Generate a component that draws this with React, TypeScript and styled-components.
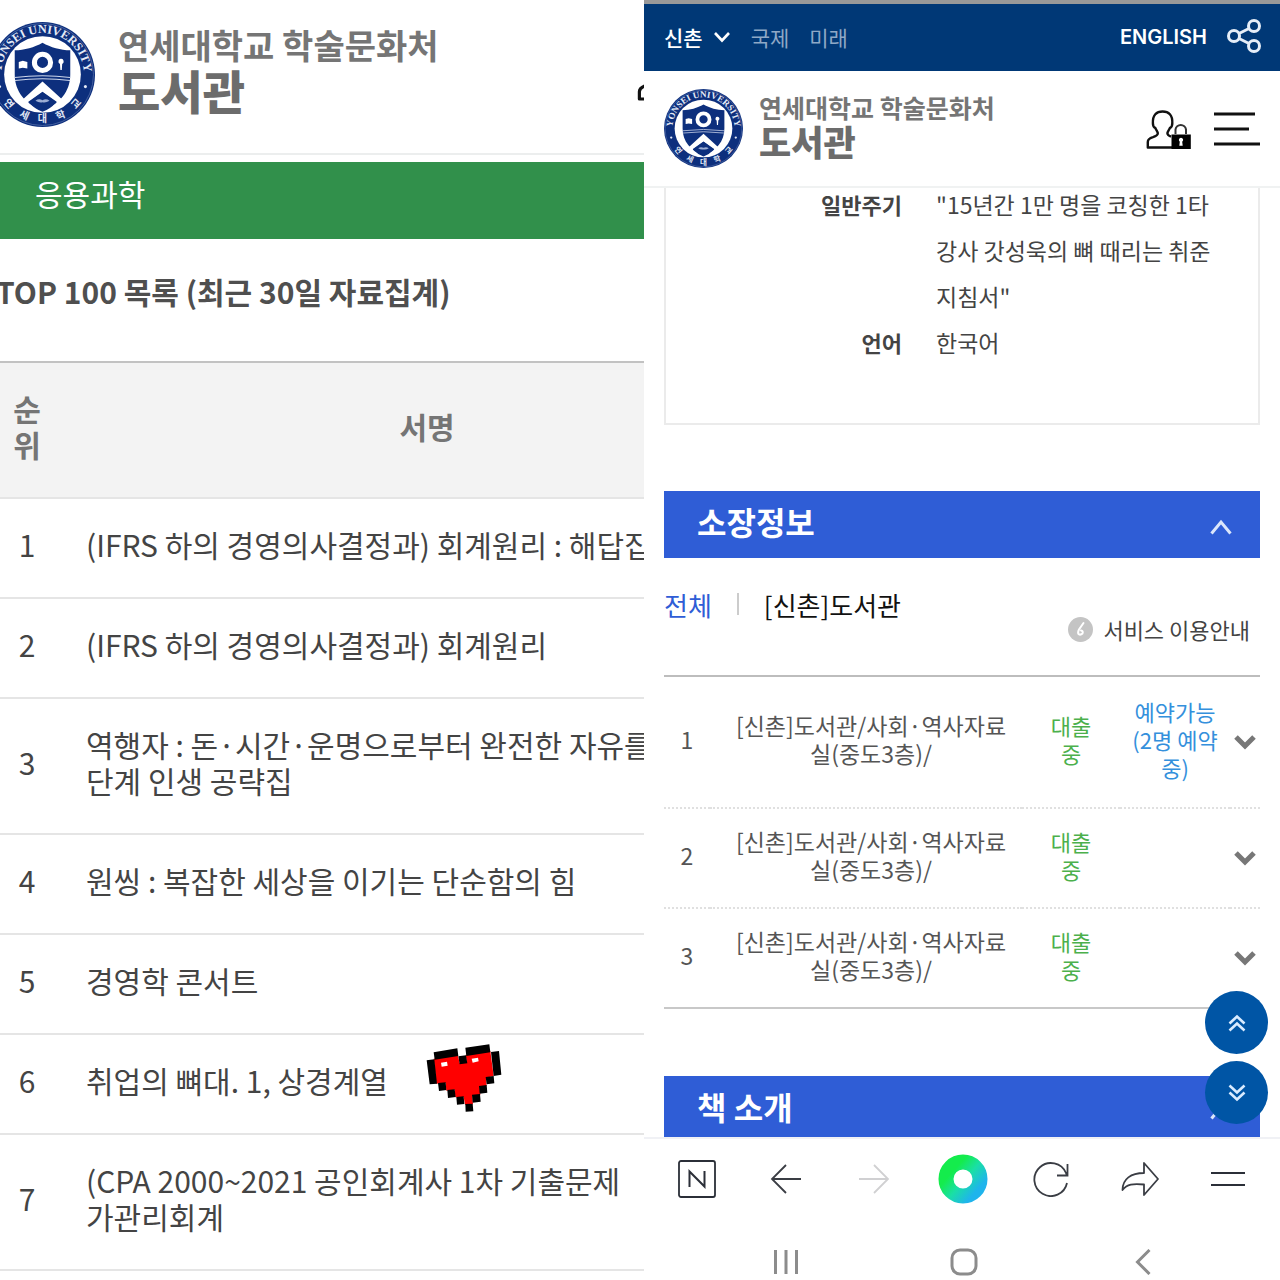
import React from "react";
import styled, { createGlobalStyle } from "styled-components";

const Global = createGlobalStyle`
  *, *::before, *::after { box-sizing: border-box; }
  body {
    margin: 0;
    background: #fff;
    color: #444;
    font-family: "Noto Sans CJK KR", "Noto Sans", sans-serif;
  }
  button {
    border: 0;
    padding: 0;
    background: none;
    font: inherit;
    color: inherit;
    cursor: pointer;
  }
  a { color: inherit; text-decoration: none; }
  h1, h2, h3, p, dl, dd { margin: 0; }
  table { border-collapse: collapse; border-spacing: 0; }
  svg { display: block; flex: none; }
`;

const Page = styled.div`
  display: grid;
  grid-template-columns: 644fr 636fr;
  height: 100vh;
  overflow: hidden;
`;

/* ---------- shared logo ---------- */

const LogoLink = styled.a<{ $large?: boolean }>`
  display: flex;
  align-items: center;
  gap: ${(p) => (p.$large ? 23 : 16)}px;
  color: #757575;
  font-weight: 700;
  white-space: nowrap;
`;

const LogoText = styled.span<{ $large?: boolean }>`
  display: flex;
  flex-direction: column;
  padding-bottom: ${(p) => (p.$large ? 14 : 10)}px;
  font-size: ${(p) => (p.$large ? 34 : 25)}px;
  line-height: ${(p) => (p.$large ? 44 : 34)}px;
`;

const LogoName = styled.strong<{ $large?: boolean }>`
  color: #6c6c6c;
  font-size: ${(p) => (p.$large ? 46 : 35)}px;
`;

const sealLetters = [
  { char: "연", angle: 49 },
  { char: "세", angle: 24 },
  { char: "대", angle: 0 },
  { char: "학", angle: -24 },
  { char: "교", angle: -49 },
];

function Emblem({ size, id }: { size: number; id: string }) {
  return (
    <svg width={size} height={size} viewBox="0 0 104 104" aria-hidden="true">
      <defs>
        <path id={id} d="M13.5 66 A41 41 0 1 1 90.5 66" />
      </defs>
      <circle cx="52" cy="52" r="52" fill="#0d2f7d" />
      <circle cx="52" cy="52" r="50.500" fill="none" stroke="#5a74ad" strokeWidth="0.700" />
      <circle cx="52" cy="52" r="38" fill="#fff" />
      <text fill="#e4eaf6" fontFamily="Liberation Serif, serif" fontWeight="700" fontSize="12">
        <textPath href={`#${id}`} startOffset="50%" textAnchor="middle">
          YONSEI UNIVERSITY
        </textPath>
      </text>
      {sealLetters.map(({ char, angle }) => (
        <text
          key={char}
          x="52"
          y="99.500"
          transform={`rotate(${angle} 52 52)`}
          textAnchor="middle"
          fill="#e4eaf6"
          fontFamily="Noto Sans CJK KR, sans-serif"
          fontWeight="700"
          fontSize="10"
        >
          {char}
        </text>
      ))}
      <circle cx="9.500" cy="64" r="1.500" fill="#e4eaf6" />
      <circle cx="94.500" cy="64" r="1.500" fill="#e4eaf6" />
      <path
        d="M52 20.5C44 25 34 28 24.5 28V52C24.5 69 35 81 52 88C69 81 79.5 69 79.5 52V28C70 28 60 25 52 20.5Z"
        fill="#0d2f7d"
      />
      <circle cx="52" cy="40" r="8" fill="none" stroke="#fff" strokeWidth="5" />
      <path d="M28.5 39.5L32.5 38.5L37 39.5V46L32.5 45.3L28.5 46Z" fill="#fff" />
      <path d="M70.5 36.5a2.4 2.6 0 0 1 1 5l-.4 6h-1.4l-.4-6a2.4 2.6 0 0 1 1.2-5Z" fill="#fff" />
      <path d="M24.5 55Q52 51.5 79.5 55M24.6 58Q52 54.5 79.4 58" fill="none" stroke="#cfd8ec" strokeWidth="1" />
      <path d="M52 59L30 79Q34 83 38.5 86L38 79L52 69L66 79L65.5 86Q70 83 74 79Z" fill="#fff" />
      <path d="M39 79L52 69.5L65 79V80Q60 86 52 89Q44 86 39 80Z" fill="#0d2f7d" />
      <path d="M45 78Q48.5 75.5 52 77.5Q55.5 75.5 59 78Q55 80.5 52 79.5Q49 80.5 45 78Z" fill="#9cadd3" />
    </svg>
  );
}

function Logo({ large, id }: { large?: boolean; id: string }) {
  return (
    <LogoLink href="#" $large={large}>
      <Emblem size={large ? 105 : 79} id={id} />
      <LogoText $large={large}>
        연세대학교 학술문화처
        <LogoName $large={large}>도서관</LogoName>
      </LogoText>
    </LogoLink>
  );
}

function UserLockIcon({ size }: { size: number }) {
  return (
    <svg width={size} height={size} viewBox="0 0 46 46" fill="none" aria-hidden="true">
      <path
        d="M26 41.500H1.800V36C1.800 33.200 3.800 32.200 7 31.200C10.500 30 11.800 29 11.800 27.300C11.800 25.500 10.300 24.300 9.300 22C7.900 21.500 6.900 19.300 6.900 17.300C6.500 9 10.500 5.500 16.600 5.500C22.700 5.500 26.700 9 26.300 17.300C26.300 19.300 25.300 21.500 23.900 22C22.900 24.300 21.400 25.500 21.400 27.300C21.400 28.700 22.200 29.600 25 30.600"
        stroke="#111"
        strokeWidth="2.400"
        strokeLinejoin="round"
      />
      <path d="M29.500 28V23.500A5.300 5.300 0 0 1 40 23.500V28" stroke="#333" strokeWidth="2" />
      <path d="M25.500 28.500H44.800V43H25.500Z" fill="#000" />
      <path d="M35 31.700a2.200 2.200 0 0 1 1.200 4l.5 4h-3.400l.5-4a2.200 2.200 0 0 1 1.200-4Z" fill="#fff" />
    </svg>
  );
}

/* ---------- left: ranking list ---------- */

const RankingPane = styled.section`
  min-width: 0;
  overflow: hidden;
`;

const RankingHeader = styled.header`
  display: flex;
  align-items: center;
  justify-content: space-between;
  width: calc(100% + 64px);
  height: 155px;
  margin-left: -10px;
  padding-bottom: 5px;
  border-bottom: 2px solid #eceeee;
`;

const CategoryBar = styled.h2`
  height: 77px;
  margin-top: 7px;
  padding: 9px 35px 0;
  background: #31904b;
  color: #fff;
  font-size: 30px;
  font-weight: 400;
  line-height: 44px;
`;

const RankingTitle = styled.h3`
  height: 122px;
  margin-left: -4px;
  padding-top: 30px;
  color: #4f4f4f;
  font-size: 30px;
  font-weight: 700;
  line-height: 44px;
  white-space: nowrap;
`;

const RankingTable = styled.table`
  width: calc(100% + 156px);
  table-layout: fixed;
  border-top: 2px solid #c2c2c2;
  font-size: 30px;
  line-height: 36px;
`;

const RankHead = styled.th<{ $narrow?: boolean }>`
  width: ${(p) => (p.$narrow ? "54px" : "auto")};
  padding: 27px 12px 35px;
  border-bottom: 2px solid #e5e5e5;
  background: #f3f3f3;
  color: #757575;
  font-weight: 700;
`;

const RankCell = styled.td`
  padding: 27px 0 35px;
  border-bottom: 2px solid #e5e5e5;
  text-align: center;
`;

const TitleCell = styled.td`
  padding: 27px 0 35px 32px;
  border-bottom: 2px solid #e5e5e5;
  white-space: nowrap;
`;

const Line = styled.span`
  display: block;
`;

const StickerAnchor = styled.span`
  position: relative;
`;

const Sticker = styled.span`
  position: absolute;
  left: 38px;
  top: -15px;
`;

function HeartSticker() {
  return (
    <svg width="77" height="71" viewBox="77 38 231 213" role="img" aria-label="하트">
      <path
        d="M100 85L172 74L178 98L199 95L196 73L270 62L280 137L257 142L259 166L238 170L240 194L216 198L218 222L194 223L190 200L165 201L163 178L138 181L136 158L108 160Z"
        fill="#f00"
      />
      <path
        d="M100 66L171 54L174 77L103 88ZM195 52L267 42L270 66L198 77ZM174 78L197 75L201 99L178 102ZM79 90L102 87L110 160L88 162ZM272 65L296 62L303 133L280 137ZM113 158L136 156L138 179L116 182ZM141 179L163 177L166 200L143 203ZM168 200L190 198L192 221L170 223ZM195 221L217 220L219 243L196 244ZM215 193L239 191L241 214L217 217ZM236 167L259 164L261 187L238 190ZM256 140L280 137L282 159L259 162Z"
        fill="#000"
      />
      <path d="M122 97L140 94L142 106L124 109ZM214 85L233 82L235 93L217 97Z" fill="#fff" />
    </svg>
  );
}

const books: { lines: string[]; sticker?: boolean }[] = [
  { lines: ["(IFRS 하의 경영의사결정과) 회계원리 : 해답집"] },
  { lines: ["(IFRS 하의 경영의사결정과) 회계원리"] },
  { lines: ["역행자 : 돈·시간·운명으로부터 완전한 자유를", "단계 인생 공략집"] },
  { lines: ["원씽 : 복잡한 세상을 이기는 단순함의 힘"] },
  { lines: ["경영학 콘서트"] },
  { lines: ["취업의 뼈대. 1, 상경계열"], sticker: true },
  { lines: ["(CPA 2000~2021 공인회계사 1차 기출문제", "가관리회계"] },
];

function Ranking() {
  return (
    <RankingPane>
      <RankingHeader>
        <Logo large id="emblem-large" />
        <UserLockIcon size={61} />
      </RankingHeader>
      <CategoryBar>응용과학</CategoryBar>
      <RankingTitle>TOP 100 목록 (최근 30일 자료집계)</RankingTitle>
      <RankingTable>
        <thead>
          <tr>
            <RankHead $narrow>순위</RankHead>
            <RankHead>서명</RankHead>
          </tr>
        </thead>
        <tbody>
          {books.map((book, i) => (
            <tr key={i}>
              <RankCell>{i + 1}</RankCell>
              <TitleCell>
                {book.lines.map((line, n) => (
                  <Line key={n}>
                    {line}
                    {book.sticker && (
                      <StickerAnchor>
                        <Sticker>
                          <HeartSticker />
                        </Sticker>
                      </StickerAnchor>
                    )}
                  </Line>
                ))}
              </TitleCell>
            </tr>
          ))}
        </tbody>
      </RankingTable>
    </RankingPane>
  );
}

/* ---------- right: book detail in a phone browser ---------- */

const DetailPane = styled.section`
  display: flex;
  flex-direction: column;
  min-width: 0;
  min-height: 0;
  border-top: 4px solid #999;
`;

const CampusBar = styled.nav`
  display: flex;
  align-items: center;
  flex: none;
  height: 67px;
  padding: 0 18px 1px 20px;
  background: #003876;
  color: #8fa8c6;
  font-size: 21px;
  line-height: 30px;
`;

const CampusButton = styled.button`
  display: flex;
  align-items: center;
  gap: 10px;
  margin-right: 20px;
  color: #fff;
  font-weight: 500;
`;

const CampusLink = styled.a`
  margin-right: 20px;
`;

const EnglishLink = styled.a`
  margin-left: auto;
  margin-right: 19px;
  color: #fff;
  font-family: Inter, "Noto Sans", sans-serif;
  font-size: 20px;
  font-weight: 600;
`;

const DetailHeader = styled.header`
  display: flex;
  align-items: center;
  flex: none;
  height: 117px;
  padding: 0 20px;
  border-bottom: 2px solid #f0f2f2;
`;

const HeaderActions = styled.div`
  display: flex;
  align-items: center;
  gap: 22px;
  margin-left: auto;
`;

const Viewport = styled.main`
  position: relative;
  flex: 1;
  min-height: 0;
  overflow: hidden;
  padding: 0 20px;
`;

const InfoCard = styled.dl`
  display: grid;
  grid-template-columns: 236px 1fr;
  column-gap: 34px;
  margin-top: -7px;
  padding: 0 48px 58px 0;
  border: 2px solid #ebebeb;
  border-top: 0;
  line-height: 46px;
`;

const InfoLabel = styled.dt`
  font-size: 22px;
  font-weight: 700;
  text-align: right;
`;

const InfoValue = styled.dd`
  font-size: 23px;
  white-space: nowrap;
`;

const SectionBar = styled.h2`
  display: flex;
  align-items: center;
  justify-content: space-between;
  height: 67px;
  padding: 0 27px 8px 33px;
  background: #2f5dd6;
  color: #fff;
  font-size: 32px;
  font-weight: 700;
  line-height: 48px;
`;

const SectionToggle = styled.button`
  padding-top: 12px;
`;

const Holdings = styled.div`
  margin: 66px 0 67px;
`;

const HoldingTools = styled.div`
  display: flex;
  justify-content: space-between;
  height: 117px;
  padding-top: 26px;
`;

const FilterTabs = styled.div`
  display: flex;
  align-items: center;
  height: 40px;
  font-size: 26px;
`;

const FilterTab = styled.button<{ $active?: boolean }>`
  color: ${(p) => (p.$active ? "#2f5dd6" : "#111")};
`;

const TabDivider = styled.span`
  width: 2px;
  height: 22px;
  margin: 0 25px;
  background: #ccc;
`;

const ServiceLink = styled.a`
  display: flex;
  align-items: center;
  gap: 10px;
  height: 40px;
  margin: 25px 10px 0 0;
  font-size: 22px;
`;

const HoldingTable = styled.table`
  width: 100%;
  table-layout: fixed;
  border-top: 2px solid #bdbdbd;
  border-bottom: 2px solid #c8c8c8;
  font-size: 23px;
  line-height: 28px;
  text-align: center;
`;

const HoldingRow = styled.tr`
  & + & {
    border-top: 2px dotted #e0e0e0;
  }
`;

const cellColors = { base: "#555", loan: "#4cb04c", reserve: "#3490dc" };

const HoldingCell = styled.td<{ $width?: number; $tone?: keyof typeof cellColors }>`
  width: ${(p) => (p.$width ? `${p.$width}px` : "auto")};
  padding: 18px 0 24px;
  color: ${(p) => cellColors[p.$tone ?? "base"]};
  font-size: ${(p) => (p.$tone ? 22 : 23)}px;
  white-space: nowrap;
`;

const LocationCell = styled(HoldingCell)`
  padding-left: 10px;
`;

const ReserveCell = styled(HoldingCell)`
  padding: 20px 0 26px;
`;

const ToggleCell = styled(HoldingCell)`
  padding: 20px 0;
`;

const RowToggle = styled.button`
  display: block;
  margin: 0 auto;
`;

const FloatingButtons = styled.div`
  position: absolute;
  right: 12px;
  bottom: 13px;
  display: flex;
  flex-direction: column;
  gap: 7px;
`;

const FloatingButton = styled.button`
  display: grid;
  place-items: center;
  width: 63px;
  height: 63px;
  border-radius: 50%;
  background: #0055a5;
`;

const BrowserBar = styled.nav`
  display: flex;
  align-items: center;
  justify-content: space-between;
  flex: none;
  height: 85px;
  padding: 0 22px 4px 23px;
  border-top: 2px solid #f0f1f5;
`;

const SystemBar = styled.nav`
  display: flex;
  align-items: center;
  justify-content: space-around;
  flex: none;
  height: 58px;
  padding: 22px 48px 0 53px;
`;

const BarButton = styled.button`
  display: grid;
  place-items: center;
  width: 60px;
`;

const IconButton = styled.button``;

const holdings: { status: string[]; reserve: string[] }[] = [
  { status: ["대출", "중"], reserve: ["예약가능", "(2명 예약", "중)"] },
  { status: ["대출", "중"], reserve: [] },
  { status: ["대출", "중"], reserve: [] },
];

function Lines({ items }: { items: string[] }) {
  return (
    <>
      {items.map((t) => (
        <Line key={t}>{t}</Line>
      ))}
    </>
  );
}

function ChevronUp() {
  return (
    <svg width="24" height="18" viewBox="0 0 24 18" fill="none" aria-hidden="true">
      <path d="M2.500 15.500L12 4L21.500 15.500" stroke="#dbe6fb" strokeWidth="3" />
    </svg>
  );
}

function Detail() {
  return (
    <DetailPane>
      <CampusBar>
        <CampusButton>
          신촌
          <svg width="18" height="12" viewBox="0 0 18 12" fill="none" aria-hidden="true">
            <path d="M2 2L9 9.500L16 2" stroke="#fff" strokeWidth="2.600" />
          </svg>
        </CampusButton>
        <CampusLink href="#">국제</CampusLink>
        <CampusLink href="#">미래</CampusLink>
        <EnglishLink href="#">ENGLISH</EnglishLink>
        <IconButton aria-label="공유">
          <svg width="36" height="36" viewBox="0 0 36 36" fill="none" stroke="#e6eef8" strokeWidth="3" aria-hidden="true">
            <circle cx="8" cy="17" r="5.500" />
            <circle cx="28" cy="7" r="5.500" />
            <circle cx="28" cy="27" r="5.500" />
            <path d="M13 14.500L23 9.500M13 19.500L23 24.500" />
          </svg>
        </IconButton>
      </CampusBar>

      <DetailHeader>
        <Logo id="emblem-small" />
        <HeaderActions>
          <IconButton aria-label="로그인">
            <UserLockIcon size={46} />
          </IconButton>
          <IconButton aria-label="메뉴">
            <svg width="46" height="34" viewBox="0 0 46 34" aria-hidden="true">
              <path d="M0 2H41M0 17H35M0 32H46" stroke="#111" strokeWidth="3" />
            </svg>
          </IconButton>
        </HeaderActions>
      </DetailHeader>

      <Viewport>
        <InfoCard>
          <InfoLabel>일반주기</InfoLabel>
          <InfoValue>
            <Line>"15년간 1만 명을 코칭한 1타</Line>
            <Line>강사 갓성욱의 뼈 때리는 취준</Line>
            <Line>지침서"</Line>
          </InfoValue>
          <InfoLabel>언어</InfoLabel>
          <InfoValue>한국어</InfoValue>
        </InfoCard>

        <Holdings>
          <SectionBar>
            소장정보
            <SectionToggle aria-label="소장정보 접기">
              <ChevronUp />
            </SectionToggle>
          </SectionBar>
          <HoldingTools>
            <FilterTabs>
              <FilterTab $active>전체</FilterTab>
              <TabDivider />
              <FilterTab>[신촌]도서관</FilterTab>
            </FilterTabs>
            <ServiceLink href="#">
              <svg width="25" height="25" viewBox="0 0 25 25" aria-hidden="true">
                <circle cx="12.500" cy="12.500" r="12.500" fill="#c4c4c4" />
                <path
                  d="M15.500 6L11 12.500Q9.500 15.500 10.500 17Q12.500 18.500 14.500 16.500Q15.500 14 13 13.500"
                  fill="none"
                  stroke="#fff"
                  strokeWidth="2"
                  strokeLinecap="round"
                />
              </svg>
              서비스 이용안내
            </ServiceLink>
          </HoldingTools>
          <HoldingTable>
            <tbody>
              {holdings.map((h, i) => (
                <HoldingRow key={i}>
                  <HoldingCell $width={46}>{i + 1}</HoldingCell>
                  <LocationCell>
                    <Line>[신촌]도서관/사회·역사자료</Line>
                    <Line>실(중도3층)/</Line>
                  </LocationCell>
                  <HoldingCell $width={98} $tone="loan">
                    <Lines items={h.status} />
                  </HoldingCell>
                  <ReserveCell $width={110} $tone="reserve">
                    <Lines items={h.reserve} />
                  </ReserveCell>
                  <ToggleCell $width={30}>
                    <RowToggle aria-label="펼치기">
                      <svg width="22" height="16" viewBox="0 0 22 16" fill="none" aria-hidden="true">
                        <path d="M2 3L11 12L20 3" stroke="#777" strokeWidth="5" />
                      </svg>
                    </RowToggle>
                  </ToggleCell>
                </HoldingRow>
              ))}
            </tbody>
          </HoldingTable>
        </Holdings>

        <SectionBar>
          책 소개
          <SectionToggle aria-label="책 소개 접기">
            <ChevronUp />
          </SectionToggle>
        </SectionBar>

        <FloatingButtons>
          <FloatingButton aria-label="맨 위로">
            <svg width="18" height="18" viewBox="0 0 18 18" fill="none" stroke="#d9ebff" strokeWidth="2.600" aria-hidden="true">
              <path d="M1.500 9.500L9 2.500L16.500 9.500M1.500 16.500L9 9.500L16.500 16.500" />
            </svg>
          </FloatingButton>
          <FloatingButton aria-label="맨 아래로">
            <svg width="18" height="18" viewBox="0 0 18 18" fill="none" stroke="#d9ebff" strokeWidth="2.600" aria-hidden="true">
              <path d="M1.500 1.500L9 8.500L16.500 1.500M1.500 8.500L9 15.500L16.500 8.500" />
            </svg>
          </FloatingButton>
        </FloatingButtons>
      </Viewport>

      <BrowserBar>
        <BarButton aria-label="네이버 홈">
          <svg width="38" height="38" viewBox="0 0 38 38" fill="none" stroke="#2b2f38" aria-hidden="true">
            <rect x="1" y="1" width="36" height="36" rx="2" strokeWidth="1.800" />
            <path d="M11.500 27V11.500L26.500 26.500V11" strokeWidth="2" />
          </svg>
        </BarButton>
        <BarButton aria-label="뒤로">
          <svg width="32" height="30" viewBox="0 0 32 30" fill="none" stroke="#3a3d44" strokeWidth="1.800" aria-hidden="true">
            <path d="M31 15H2M16 1L2 15L16 29" />
          </svg>
        </BarButton>
        <BarButton aria-label="앞으로">
          <svg width="32" height="30" viewBox="0 0 32 30" fill="none" stroke="#d0d0d2" strokeWidth="1.800" aria-hidden="true">
            <path d="M1 15H30M16 1L30 15L16 29" />
          </svg>
        </BarButton>
        <BarButton aria-label="그린닷">
          <svg width="50" height="50" viewBox="0 0 50 50" fill="none" aria-hidden="true">
            <defs>
              <linearGradient id="dot" x1="0.100" y1="0.150" x2="0.900" y2="0.850">
                <stop offset="0.150" stopColor="#14ec4c" />
                <stop offset="0.550" stopColor="#1adfa6" />
                <stop offset="1" stopColor="#1fb4ec" />
              </linearGradient>
            </defs>
            <circle cx="25" cy="25" r="17" stroke="url(#dot)" strokeWidth="15" />
          </svg>
        </BarButton>
        <BarButton aria-label="새로고침">
          <svg width="36" height="36" viewBox="0 0 36 36" fill="none" stroke="#3a3d44" strokeWidth="1.800" aria-hidden="true">
            <path d="M34 22A16.500 16.500 0 1 1 33 12L34 14M34.500 3V14.500H24" />
          </svg>
        </BarButton>
        <BarButton aria-label="공유하기">
          <svg width="38" height="36" viewBox="0 0 38 36" fill="none" stroke="#3a3d44" strokeWidth="1.800" strokeLinejoin="round" aria-hidden="true">
            <path d="M23 2L37 18L23 34V23.500C12 22.500 6 23 1.500 29C1.500 18 10 12 23 12Z" />
          </svg>
        </BarButton>
        <BarButton aria-label="더보기">
          <svg width="34" height="16" viewBox="0 0 34 16" stroke="#2b2f38" strokeWidth="1.800" aria-hidden="true">
            <path d="M0 2H34M0 14H34" />
          </svg>
        </BarButton>
      </BrowserBar>

      <SystemBar>
        <BarButton aria-label="최근 앱">
          <svg width="26" height="26" viewBox="0 0 26 26" stroke="#8c8c8c" strokeWidth="3" aria-hidden="true">
            <path d="M2.500 1V25M13 1V25M23.500 1V25" />
          </svg>
        </BarButton>
        <BarButton aria-label="홈">
          <svg width="28" height="28" viewBox="0 0 28 28" fill="none" stroke="#8c8c8c" strokeWidth="3" aria-hidden="true">
            <rect x="2" y="2" width="24" height="24" rx="8" />
          </svg>
        </BarButton>
        <BarButton aria-label="이전">
          <svg width="16" height="26" viewBox="0 0 16 26" fill="none" stroke="#8c8c8c" strokeWidth="3" aria-hidden="true">
            <path d="M14.500 1L2.500 13L14.500 25" />
          </svg>
        </BarButton>
      </SystemBar>
    </DetailPane>
  );
}

export default function App() {
  return (
    <>
      <Global />
      <Page>
        <Ranking />
        <Detail />
      </Page>
    </>
  );
}
